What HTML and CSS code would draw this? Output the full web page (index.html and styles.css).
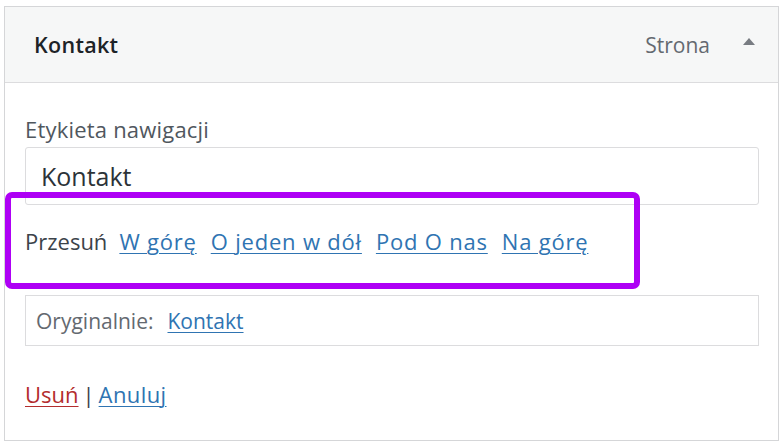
FILE: index.html
```html
<!DOCTYPE html>
<html lang="pl">
<head>
<meta charset="utf-8">
<title>Kontakt</title>
<link rel="stylesheet" href="styles.css">
</head>
<body>
<div class="panel">
  <div class="panel-header">
    <span class="item-title">Kontakt</span>
    <span class="item-type">Strona</span>
    <span class="toggle" aria-hidden="true"></span>
  </div>
  <div class="panel-body">
    <label class="field-label" for="nav-label">Etykieta nawigacji</label>
    <input class="field-input" id="nav-label" type="text" value="Kontakt">
    <div class="move-row">
      <span class="move-label">Przesuń</span>
      <a href="#" class="link">W górę</a>
      <a href="#" class="link">O jeden w dół</a>
      <a href="#" class="link">Pod O nas</a>
      <a href="#" class="link">Na górę</a>
      <span class="highlight" aria-hidden="true"></span>
    </div>
    <div class="original">
      <span class="original-label">Oryginalnie:</span>
      <a href="#" class="link">Kontakt</a>
    </div>
    <div class="actions">
      <a href="#" class="link link-delete">Usuń</a>
      <span class="sep">|</span>
      <a href="#" class="link">Anuluj</a>
    </div>
  </div>
</div>
</body>
</html>
```
FILE: styles.css
```css
html, body {
  margin: 0;
  padding: 0;
  background: #ffffff;
}

body {
  font-family: "Open Sans", "Noto Sans", sans-serif;
  color: #3c434a;
  font-size: 22px;
}

.panel {
  box-sizing: border-box;
  margin: 6px 0 0 4px;
  width: 775px;
  height: 435px;
  border: 1px solid #d5d6d8;
  display: flex;
  flex-direction: column;
}

.panel-header {
  box-sizing: border-box;
  height: 76px;
  background: #f6f7f7;
  border-bottom: 1px solid #dcdcde;
  display: flex;
  align-items: center;
  padding: 0 23px 0 29px;
}

.item-title {
  font-weight: 600;
  color: #1d2327;
  font-size: 21.5px;
  flex: 1;
  letter-spacing: 0.3px;
}

.item-type {
  color: #646970;
  font-size: 21px;
  margin-right: 33px;
}

.toggle {
  width: 0;
  height: 0;
  border-left: 6.5px solid transparent;
  border-right: 6.5px solid transparent;
  border-bottom: 7px solid #787c82;
  margin-top: -6px;
}

.panel-body {
  padding: 32px 19px 0 20px;
  display: flex;
  flex-direction: column;
  align-items: stretch;
}

.field-label {
  display: block;
  line-height: 28px;
  color: #50575e;
  margin-bottom: 4px;
  letter-spacing: 0.2px;
}

.field-input {
  box-sizing: border-box;
  height: 58px;
  width: 100%;
  border: 1px solid #dcdcde;
  border-radius: 3px;
  padding: 0 15px;
  font-family: "Open Sans", "Noto Sans", sans-serif;
  font-size: 25px;
  color: #2c3338;
  background: #fff;
  margin: 0;
  outline: none;
}

.move-row {
  position: relative;
  display: flex;
  align-items: baseline;
  column-gap: 14px;
  margin-top: 22px;
  line-height: 28px;
}

.move-label {
  color: #3c434a;
  margin-right: -2px;
}

.link {
  color: #2f74b2;
  text-decoration: underline;
  text-underline-offset: 3px;
  text-decoration-thickness: 1px;
}

.move-row .link {
  letter-spacing: 0.8px;
}

.link-delete {
  color: #b32d2e;
}

.highlight {
  position: absolute;
  left: -20px;
  top: -35px;
  width: 635px;
  height: 97px;
  box-sizing: border-box;
  border: 6px solid #ae00f5;
  border-radius: 7px;
  pointer-events: none;
}

.original {
  box-sizing: border-box;
  margin-top: 40px;
  height: 51px;
  border: 1px solid #dcdcde;
  display: flex;
  align-items: center;
  padding: 0 10px;
  gap: 14px;
  font-size: 21px;
}

.original-label {
  color: #646970;
}

.actions {
  margin-top: 34px;
  line-height: 28px;
  display: flex;
  align-items: baseline;
  gap: 4px;
}

.actions .link {
  letter-spacing: 0.4px;
}

.actions .link-delete {
  letter-spacing: 0;
}

.sep {
  color: #3c434a;
}
```
